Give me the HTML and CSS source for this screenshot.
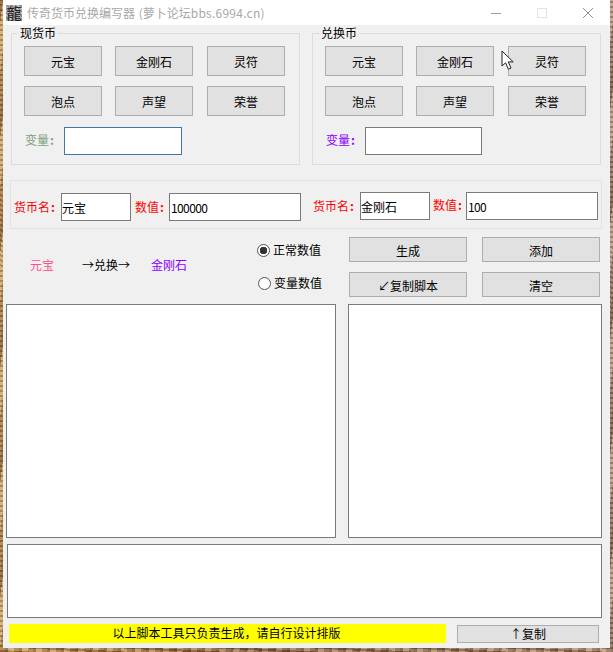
FILE: index.html
```html
<!DOCTYPE html>
<html lang="zh">
<head>
<meta charset="utf-8">
<title>传奇货币兑换编写器</title>
<link rel="stylesheet" href="styles.css">
</head>
<body>
<div class="window">
  <header class="titlebar">
    <span class="appicon">龍</span>
    <span class="apptitle">传奇货币兑换编写器 (萝卜论坛<span class="latin">bbs.6994.cn)</span></span>
    <div class="controls">
      <svg class="ctl" width="12" height="12" viewBox="0 0 12 12"><path d="M1 6.5H11" stroke="#a0a0a0" fill="none"/></svg>
      <svg class="ctl" width="12" height="12" viewBox="0 0 12 12"><rect x="1.5" y="1.5" width="9" height="9" stroke="#e3e3e3" fill="none"/></svg>
      <svg class="ctl" width="12" height="12" viewBox="0 0 12 12"><path d="M1 1L11 11M11 1L1 11" stroke="#8c8c8c" fill="none"/></svg>
    </div>
  </header>

  <div class="groups">
    <section class="group">
      <div class="legend">现货币</div>
      <div class="btngrid">
        <button class="btn">元宝</button><button class="btn">金刚石</button><button class="btn">灵符</button>
        <button class="btn">泡点</button><button class="btn">声望</button><button class="btn">荣誉</button>
      </div>
      <div class="varrow">
        <label class="varlabel green">变量<b class="colon">:</b></label>
        <input class="box varbox focus" type="text">
      </div>
    </section>
    <section class="group">
      <div class="legend">兑换币</div>
      <div class="btngrid">
        <button class="btn">元宝</button><button class="btn">金刚石</button><button class="btn">灵符</button>
        <button class="btn">泡点</button><button class="btn">声望</button><button class="btn">荣誉</button>
      </div>
      <div class="varrow">
        <label class="varlabel purple">变量<b class="colon">:</b></label>
        <input class="box varbox narrow" type="text">
      </div>
    </section>
  </div>

  <section class="panel">
    <div class="pair">
      <label class="redlabel name">货币名<b class="colon">:</b></label>
      <input class="box namebox" type="text" value="元宝">
      <label class="redlabel val">数值<b class="colon">:</b></label>
      <input class="box valbox" type="text" value="100000">
    </div>
    <div class="pair second">
      <label class="redlabel name">货币名<b class="colon">:</b></label>
      <input class="box namebox" type="text" value="金刚石">
      <label class="redlabel val up">数值<b class="colon">:</b></label>
      <input class="box valbox" type="text" value="100">
    </div>
  </section>

  <section class="mid">
    <div class="flow">
      <span class="pink">元宝</span>
      <span class="arrowtext">→兑换→</span>
      <span class="purple">金刚石</span>
    </div>
    <div class="radios">
      <label class="radio"><input type="radio" name="mode" checked><span>正常数值</span></label>
      <label class="radio shifted"><input type="radio" name="mode"><span>变量数值</span></label>
    </div>
    <div class="actions">
      <button class="btn wide">生成</button>
      <button class="btn wide">添加</button>
      <button class="btn wide">↙复制脚本</button>
      <button class="btn wide">清空</button>
    </div>
  </section>

  <div class="areas">
    <textarea class="box area-left"></textarea>
    <textarea class="box area-right"></textarea>
  </div>
  <textarea class="box area-bottom"></textarea>

  <footer class="footer">
    <div class="notice">以上脚本工具只负责生成，请自行设计排版</div>
    <button class="btn copy">↑复制</button>
  </footer>
</div>

<svg class="cursor" width="14" height="21" viewBox="0 0 14 21">
  <path d="M1 1V16L4.6 12.8L7.4 19.2L10 18L7.3 11.9H12.2Z" fill="#fff" stroke="#222" stroke-width="1"/>
</svg>
</body>
</html>
```

FILE: styles.css
```css
* {
  box-sizing: border-box;
}

html,
body {
  margin: 0;
  height: 100%;
}

body {
  position: relative;
  overflow: hidden;
  font: 12px/14px "Noto Sans CJK SC", "Liberation Sans", sans-serif;
  color: #000;
  background:
    repeating-linear-gradient(97deg, rgba(70, 35, 10, 0.35) 0 3px, rgba(255, 230, 180, 0.15) 3px 9px, rgba(70, 35, 10, 0.2) 9px 14px),
    repeating-linear-gradient(3deg, rgba(60, 30, 10, 0.3) 0 2px, rgba(255, 235, 190, 0.2) 2px 5px),
    linear-gradient(90deg, #c89a5c 0 8px, #8b6a50 40%, #a98d80 100%);
}

.window {
  position: absolute;
  left: 3px;
  top: 0;
  width: 607px;
  height: 648px;
  background: #f0f0f0;
  overflow: hidden;
}

.titlebar {
  display: flex;
  align-items: center;
  height: 25px;
  padding-left: 3px;
  background: #fff;
}

.appicon {
  width: 16px;
  height: 16px;
  margin-right: 5px;
  background: repeating-linear-gradient(45deg, #999 0 1px, #c4c4c4 1px 2px, #858585 2px 3px);
  font-size: 15px;
  line-height: 16px;
  text-align: center;
  color: #222;
}

.apptitle {
  color: #a8a8a8;
  white-space: pre;
  word-spacing: 1px;
}

.latin {
  letter-spacing: 0.25px;
}

.controls {
  display: flex;
  gap: 34px;
  margin-left: auto;
  margin-right: 16px;
}

.ctl {
  display: block;
}

.groups {
  display: flex;
  gap: 12px;
  margin: 8px 0 0 8px;
}

.group {
  width: 289px;
  height: 132px;
  padding: 0 0 0 12px;
  border: 1px solid #dcdcdc;
}

.legend {
  display: table;
  height: 14px;
  margin: -8px 0 6px -6px;
  padding: 0 2px;
  background: #f0f0f0;
}

.btngrid {
  display: grid;
  grid-template-columns: 91px 92px 78px;
  row-gap: 10px;
}

.btn {
  display: block;
  width: 78px;
  height: 30px;
  padding: 2px 0 0;
  border: 1px solid #adadad;
  border-radius: 0;
  background: #e1e1e1;
  font: inherit;
  color: #000;
}

.varrow {
  display: flex;
  align-items: center;
  margin-top: 11px;
}

.varlabel {
  width: 40px;
  padding: 0 0 2px 1px;
}

.colon {
  margin-left: 1px;
}

.green {
  color: #7f9f7f;
}

.purple {
  color: #8b00ff;
}

.pink {
  color: #ff4f8b;
}

.box {
  display: block;
  margin: 0;
  padding: 0 1px;
  border: 1px solid #7a7a7a;
  border-radius: 0;
  outline: 0;
  background: #fff;
  font: inherit;
  color: #000;
  resize: none;
}

.varbox {
  width: 118px;
  height: 28px;
}

.varbox.narrow {
  width: 117px;
}

.focus {
  border-color: #3f78a8;
}

.panel {
  display: flex;
  width: 592px;
  height: 49px;
  margin: 15px 0 0 7px;
  padding: 12px 0 0 3px;
  border: 1px solid #e2e2e2;
}

.pair {
  display: flex;
  align-items: center;
  height: 28px;
}

.pair.second {
  margin: -1px 0 0 12px;
}

.redlabel {
  color: #f00;
  white-space: nowrap;
}

.name {
  width: 47px;
}

.val {
  width: 34px;
  margin-left: 4px;
}

.pair.second .val {
  width: 33px;
  margin-left: 3px;
}

.up {
  position: relative;
  top: -1px;
}

.namebox {
  width: 70px;
  height: 28px;
  padding-left: 0;
}

.valbox {
  width: 132px;
  height: 28px;
  letter-spacing: -0.6px;
}

.mid {
  display: flex;
  height: 75px;
  margin-left: 27px;
}

.flow {
  display: flex;
  width: 227px;
  padding-top: 29px;
}

.arrowtext {
  margin: 0 21px 0 28px;
}

.radios {
  width: 92px;
  padding-top: 14px;
}

.radio {
  display: flex;
  align-items: center;
  height: 14px;
  margin-bottom: 19px;
}

.radio.shifted {
  margin-left: 1px;
}

.radio input {
  appearance: none;
  width: 13px;
  height: 13px;
  margin: 0 3px 0 0;
  border: 1px solid #555;
  border-radius: 50%;
  background: #fff;
}

.radio input:checked {
  background: radial-gradient(circle, #333 0 3.5px, #fff 4px);
}

.actions {
  display: grid;
  grid-template-columns: 118px 118px;
  column-gap: 15px;
  row-gap: 10px;
  align-content: start;
  padding-top: 8px;
}

.btn.wide {
  width: 118px;
  height: 25px;
}

.areas {
  display: flex;
  gap: 12px;
  margin-left: 3px;
}

.area-left {
  width: 330px;
  height: 234px;
}

.area-right {
  width: 254px;
  height: 234px;
}

.area-bottom {
  width: 595px;
  height: 74px;
  margin: 6px 0 0 4px;
}

.footer {
  display: flex;
  gap: 11px;
  margin: 6px 0 0 6px;
}

.notice {
  width: 437px;
  height: 19px;
  padding-right: 2px;
  background: #ff0;
  line-height: 18px;
  text-align: center;
}

.btn.copy {
  width: 142px;
  height: 18px;
  margin-top: 1px;
  padding: 0;
  line-height: 14px;
}

.cursor {
  position: absolute;
  left: 501px;
  top: 50px;
}
```
